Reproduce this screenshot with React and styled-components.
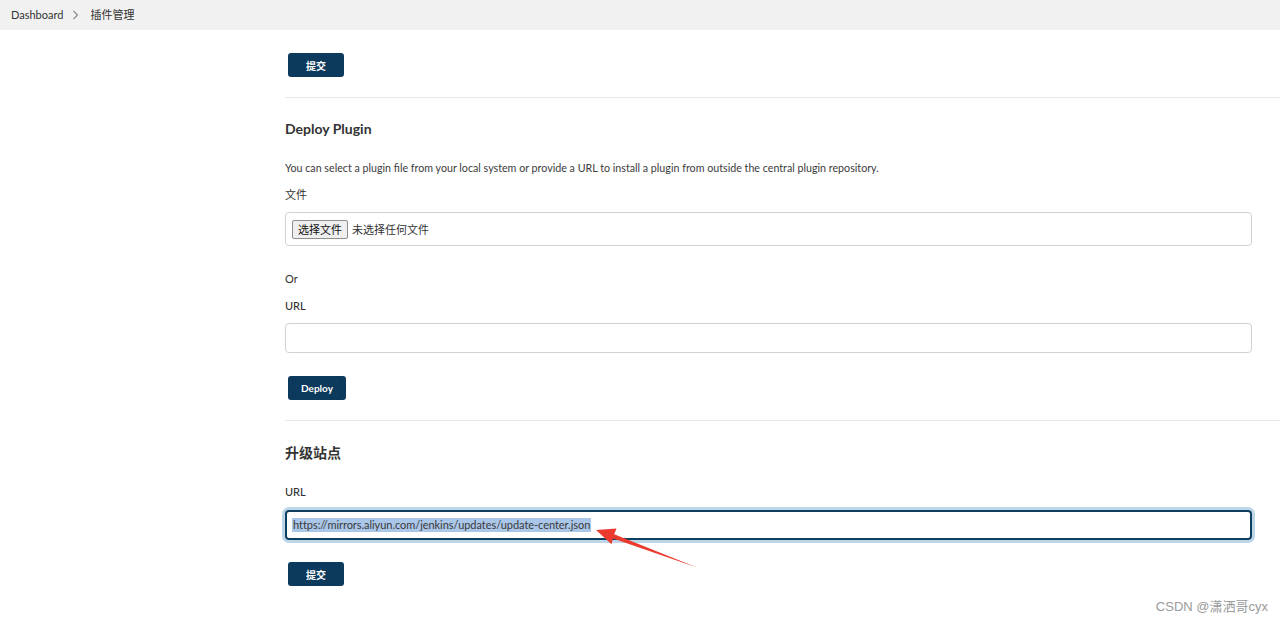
import React from "react";
import styled, { createGlobalStyle } from "styled-components";

const Global = createGlobalStyle`
  html, body {
    margin: 0;
    padding: 0;
    background: #fff;
    overflow: hidden;
  }
  body {
    font-family: Lato, "Noto Sans CJK SC", "Noto Sans", sans-serif;
    color: #333;
  }
`;

const Page = styled.div`
  position: relative;
  width: 1280px;
  height: 621px;
  overflow: hidden;
`;

const Breadcrumb = styled.div`
  height: 30px;
  background: #f1f1f1;
  display: flex;
  align-items: center;
  padding-left: 11px;
  font-size: 11px;
  color: #333;
`;

const Crumb = styled.span`
  line-height: 14px;
`;

const Chevron = styled.span`
  display: flex;
  align-items: center;
  margin: 0 11px 0 9px;
  color: #8a8a8a;
`;

const Main = styled.div`
  padding-left: 285px;
  display: flex;
  flex-direction: column;
`;

const Button = styled.button`
  align-self: flex-start;
  margin-top: ${(p) => p.$mt}px;
  margin-left: 3px;
  width: ${(p) => p.$w}px;
  height: 24px;
  border: none;
  border-radius: 3px;
  background: #0b3a5d;
  color: #fff;
  font-family: Lato, "Noto Sans CJK SC", sans-serif;
  font-size: 10px;
  font-weight: 700;
  padding: 0;
  cursor: pointer;
`;

const Divider = styled.hr`
  margin: ${(p) => p.$mt}px 0 0 0;
  border: none;
  height: 1px;
  background: #e9e9e9;
`;

const Heading = styled.h2`
  margin: ${(p) => p.$mt}px 0 0 0;
  font-size: 14px;
  line-height: 20px;
  font-weight: 700;
  color: #333;
`;

const Text = styled.div`
  margin-top: ${(p) => p.$mt}px;
  font-size: ${(p) => (p.$small ? 10.7 : 11)}px;
  line-height: 16px;
  color: ${(p) => (p.$small ? "#3c3c3c" : "#333")};
  font-weight: ${(p) => (p.$strong ? 500 : 400)};
`;

const FileBox = styled.div`
  margin-top: ${(p) => p.$mt}px;
  width: 967px;
  height: 34px;
  box-sizing: border-box;
  border: 1px solid #cfd3d7;
  border-radius: 4px;
  display: flex;
  align-items: center;
  padding-left: 6px;
  gap: 4px;
  font-size: 11px;
`;

const FileButton = styled.span`
  height: 19px;
  box-sizing: border-box;
  padding: 0 5px;
  display: flex;
  align-items: center;
  border: 1px solid #8f8f8f;
  border-radius: 2px;
  background: #efefef;
  color: #111;
  font-size: 11px;
`;

const Input = styled.div`
  margin-top: ${(p) => p.$mt}px;
  width: 967px;
  height: 30px;
  box-sizing: border-box;
  border: ${(p) => (p.$focus ? "2px solid #0e3e60" : "1px solid #cfd3d7")};
  border-radius: 4px;
  box-shadow: ${(p) => (p.$focus ? "0 0 0 3px #bcd6ea" : "none")};
  display: flex;
  align-items: center;
  padding-left: ${(p) => (p.$focus ? 5 : 6)}px;
  font-size: 11px;
  color: #3a3a3a;
`;

const Selected = styled.span`
  background: #aac6e8;
  line-height: 14px;
  padding: 0 1px;
  letter-spacing: -0.05px;
`;

const Arrow = styled.svg`
  position: absolute;
  left: 0;
  top: 0;
  pointer-events: none;
`;

const Watermark = styled.div`
  position: absolute;
  right: 12px;
  bottom: 6px;
  font-family: "Liberation Sans", "Noto Sans CJK SC", sans-serif;
  font-size: 13px;
  color: #9a9a9a;
`;

export default function App() {
  return (
    <Page>
      <Global />
      <Breadcrumb>
        <Crumb>Dashboard</Crumb>
        <Chevron>
          <svg width="7" height="10" viewBox="0 0 7 10">
            <path d="M1.5 1l4 4-4 4" fill="none" stroke="currentColor" strokeWidth="1.1" />
          </svg>
        </Chevron>
        <Crumb>插件管理</Crumb>
      </Breadcrumb>

      <Main>
        <Button $mt={23} $w={56}>提交</Button>
        <Divider $mt={20} />

        <Heading $mt={21}>Deploy Plugin</Heading>
        <Text $mt={21} $small>
          You can select a plugin file from your local system or provide a URL to install a plugin from outside the central plugin repository.
        </Text>
        <Text $mt={11}>文件</Text>
        <FileBox $mt={9}>
          <FileButton>选择文件</FileButton>
          <span>未选择任何文件</span>
        </FileBox>
        <Text $mt={25}>Or</Text>
        <Text $mt={11} $strong>URL</Text>
        <Input $mt={9} />
        <Button $mt={23} $w={58}>Deploy</Button>
        <Divider $mt={20} />

        <Heading $mt={22}>升级站点</Heading>
        <Text $mt={21} $strong>URL</Text>
        <Input $mt={10} $focus>
          <Selected>https://mirrors.aliyun.com/jenkins/updates/update-center.json</Selected>
        </Input>
        <Button $mt={22} $w={56}>提交</Button>
      </Main>

      <Arrow width="1280" height="621" viewBox="0 0 1280 621">
        <polygon
          points="697,567.5 614.2,534.2 616.5,528.6 596,530 611.5,544.2 613,538.4"
          fill="#ec3a2f"
        />
      </Arrow>

      <Watermark>CSDN @潇洒哥cyx</Watermark>
    </Page>
  );
}
